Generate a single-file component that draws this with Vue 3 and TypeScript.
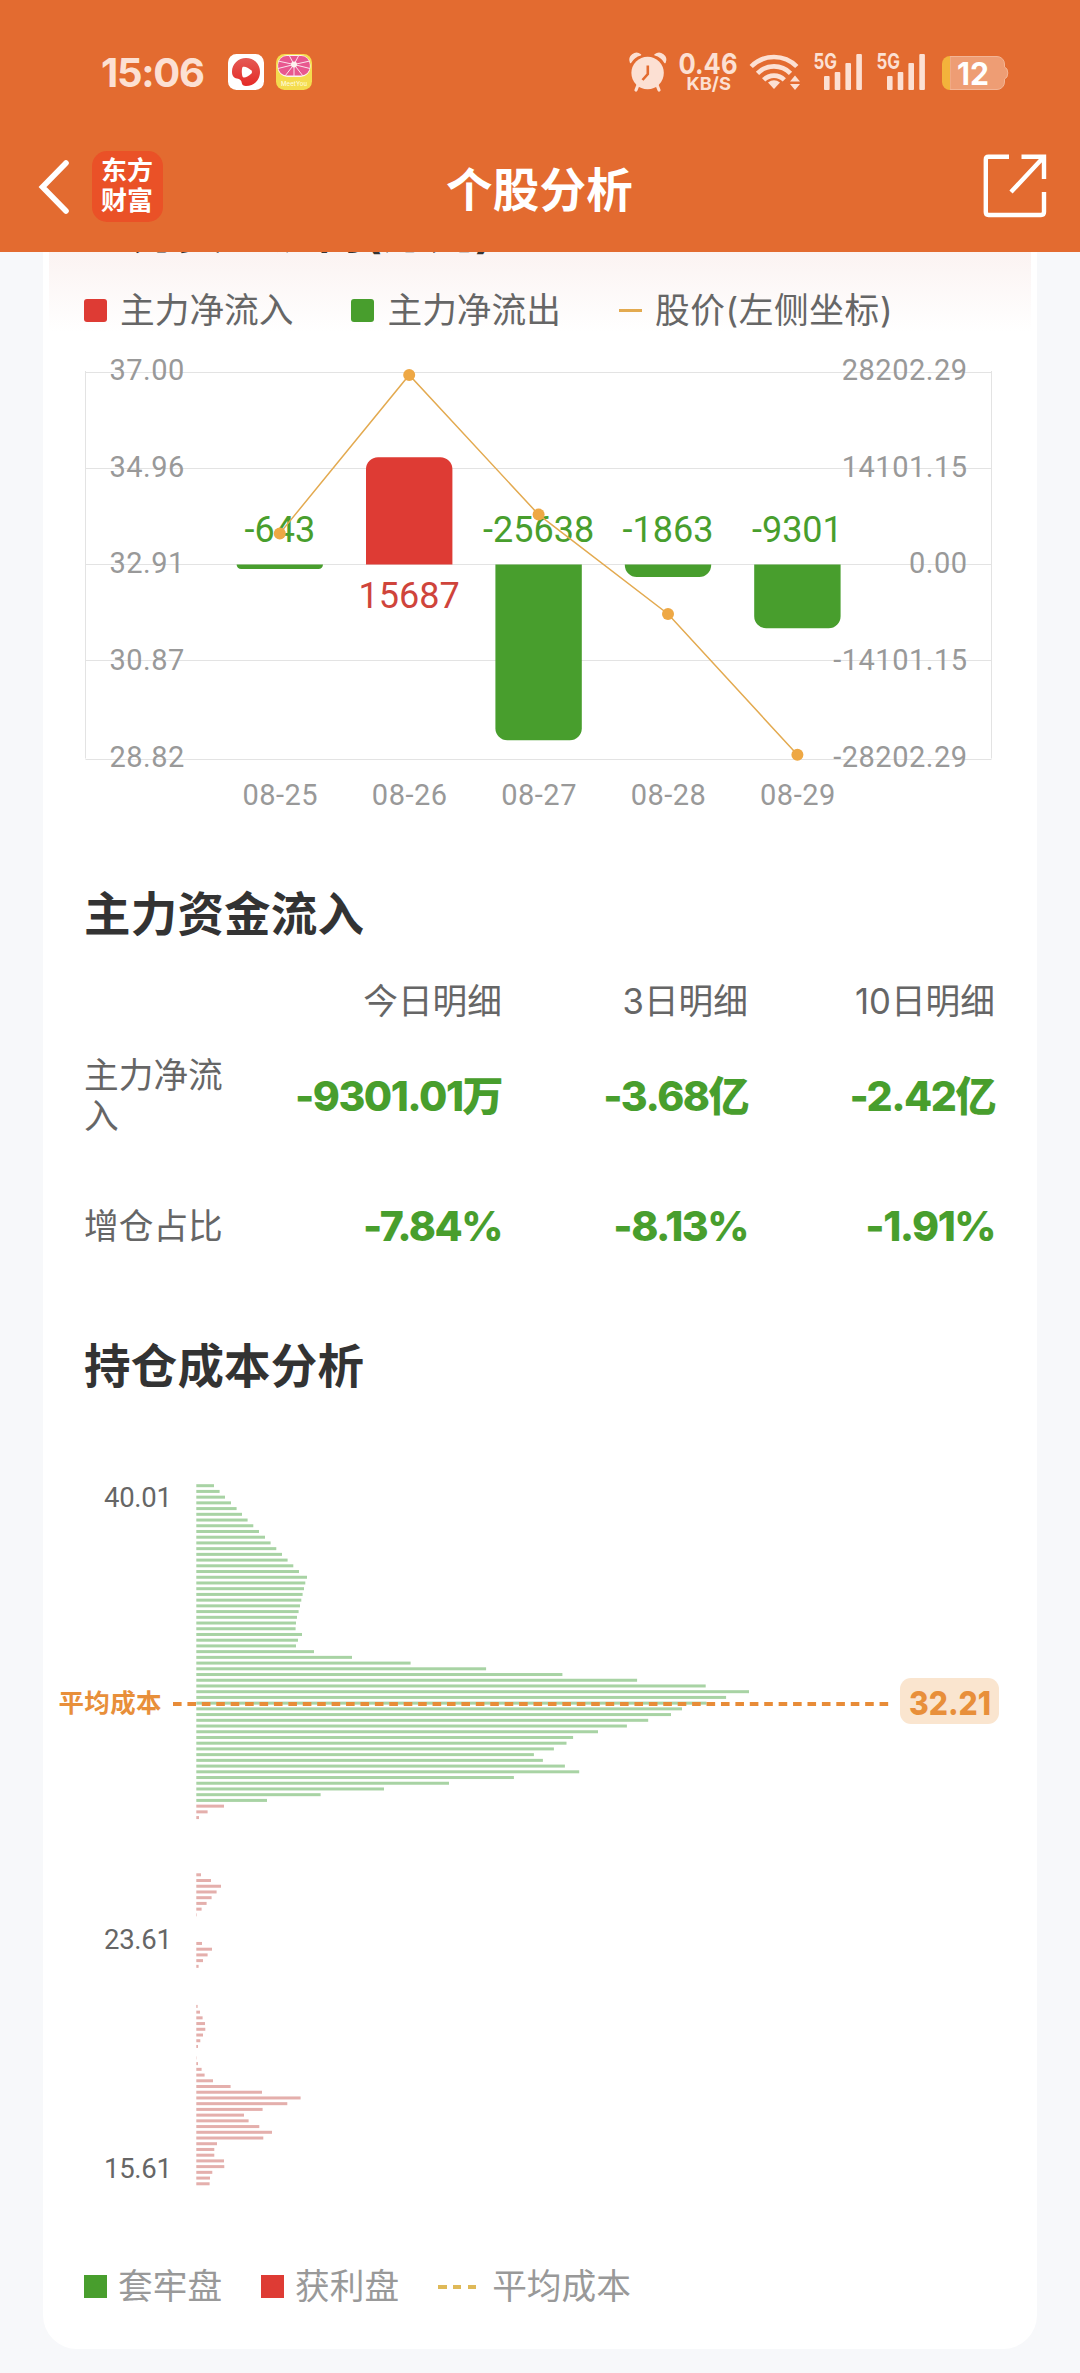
<script setup lang="ts">
interface FlowDay {
  date: string
  x: number
  value: number
  barEnd: number
  priceY: number
}

interface AxisRow {
  y: number
  label: number
  price: string
  flow: string
}

const ZERO_Y = 564.5
const BAR_HALF = 43.2

const days: FlowDay[] = [
  { date: '08-25', x: 279.8, value: -643, barEnd: 569, priceY: 533.4 },
  { date: '08-26', x: 409.2, value: 15687, barEnd: 457.3, priceY: 375 },
  { date: '08-27', x: 538.6, value: -25638, barEnd: 740.3, priceY: 514.6 },
  { date: '08-28', x: 668, value: -1863, barEnd: 577, priceY: 614 },
  { date: '08-29', x: 797.4, value: -9301, barEnd: 628.3, priceY: 754.8 },
]

const axis: AxisRow[] = [
  { y: 372.5, label: 379.7, price: '37.00', flow: '28202.29' },
  { y: 468.5, label: 476.7, price: '34.96', flow: '14101.15' },
  { y: 564.5, label: 572.7, price: '32.91', flow: '0.00' },
  { y: 660.5, label: 669.7, price: '30.87', flow: '-14101.15' },
  { y: 759.5, label: 766.7, price: '28.82', flow: '-28202.29' },
]

const pricePoints = days.map((d) => `${d.x},${d.priceY}`).join(' ')

// Bars are square on the zero line and rounded at the far end.
function barPath(d: FlowDay): string {
  const l = d.x - BAR_HALF
  const r = d.x + BAR_HALF
  const h = Math.abs(d.barEnd - ZERO_Y)
  const k = Math.min(12, h)
  const s = d.value > 0 ? -1 : 1
  const sweep = d.value > 0 ? 1 : 0
  return `M${l} ${ZERO_Y}V${d.barEnd - s * k}A${k} ${k} 0 0 ${sweep} ${l + k} ${d.barEnd}H${r - k}A${k} ${k} 0 0 ${sweep} ${r} ${d.barEnd - s * k}V${ZERO_Y}Z`
}

const table = {
  heads: ['今日明细', '3日明细', '10日明细'],
  rows: [
    { name: '主力净流入', cells: ['-9301.01万', '-3.68亿', '-2.42亿'] },
    { name: '增仓占比', cells: ['-7.84%', '-8.13%', '-1.91%'] },
  ],
}

const TRAPPED_COUNT = 56
const COST_TOP = 1485.7
const COST_STEP = 5.722

const costs: number[] = [
  17.7, 23.3, 28.7, 34.7, 40.3, 45.7, 51.3, 57, 62.7, 68.7, 74.3, 80, 85.7, 91.3, 97, 102.7,
  110.7, 109, 107.7, 106.3, 105, 103.7, 102.3, 100.7, 99.7, 99.3, 105.7, 101.7, 99.7, 117.7, 155.7, 214.3,
  289.8, 366.1, 440.8, 509.4, 552.7, 529.8, 510.2, 485.7, 474.7, 451.9, 430.6, 401.7, 376.8, 370.2,
  357.6, 337.6, 346.6, 368.6, 382.9, 317.6, 252.7, 187.7, 124.3, 70.7,
  27.7, 11.3, 2.7, 0, 0, 0, 0, 0, 0, 0, 0, 0,
  4.7, 14.7, 24.7, 20.3, 15.3, 10.3, 5.3, 0.5, 0, 0, 0, 0,
  5.7, 15.7, 11.3, 6.7, 2.3, 0, 0, 0, 0, 0, 0,
  1.3, 3.7, 6.3, 8.7, 9, 6.7, 4, 1.7, 0, 0.3,
  1.7, 5.3, 8.3, 16.7, 34.3, 65.7, 104.3, 91, 66.3, 47.7, 52.3, 63, 75.7, 67, 20.7, 18, 18, 27.7, 28, 16, 13.7, 13.3,
]

const costLabels = [
  { y: 1507, text: '40.01' },
  { y: 1949, text: '23.61' },
  { y: 2177.7, text: '15.61' },
]

const signals = [0, 63]
</script>

<template>
  <div class="page">
    <header class="header">
      <div class="status">
        <span class="clock">15:06</span>
        <svg class="app-icon" width="36" height="36" viewBox="0 0 36 36">
          <defs>
            <linearGradient id="play" x1="0" y1="0" x2="0" y2="1">
              <stop offset="0" stop-color="#e45a55" />
              <stop offset="1" stop-color="#e52a26" />
            </linearGradient>
          </defs>
          <rect width="36" height="36" rx="8.500" fill="#fff" />
          <path d="M18 4C10.300 4 4 10 4 17.500C4 21.500 5.500 24 9 24.500C12 25 13.500 26.500 13.800 29C14 31 15.500 32 18 32C26 32 32 26 32 18S26 4 18 4Z" fill="url(#play)" />
          <path d="M15 12.800Q18.500 12 23.500 16.500Q24.800 18 23.500 19.500Q18.500 24 15.500 23.500Q14 23 13.800 18Q13.800 13.300 15 12.800Z" fill="#fff" />
        </svg>
        <svg class="app-icon app-icon-2" width="36" height="36" viewBox="0 0 36 36">
          <rect width="36" height="36" rx="8.500" fill="#f4dc4e" />
          <rect x="1.500" y="1" width="33" height="22" rx="10" fill="#fdf3ee" />
          <rect x="2.200" y="2" width="31.600" height="19.500" rx="8.500" fill="#e8578f" />
          <path d="M18 10.500L13 1M18 10.500L23 1M18 10.500L2 7M18 10.500L34 7M18 10.500L2 14.500M18 10.500L34 14.500M18 10.500L9 22M18 10.500L18 23M18 10.500L27 22" stroke="#fbe3ec" stroke-width="1" />
          <circle cx="18" cy="10.500" r="3" fill="#fdf3ee" />
          <text x="18" y="31.500" text-anchor="middle" class="meet" textLength="26">MeetYou</text>
        </svg>
        <svg class="cluster" width="392" height="50" viewBox="622 46 392 50" fill="#fce0d3">
          <circle cx="647.600" cy="73" r="16.200" />
          <path d="M630.600 62.500A6.500 6.500 0 0 1 640.500 54.800Q634 56.500 630.600 62.500ZM665 62.500A6.500 6.500 0 0 0 655 54.800Q661.500 56.500 665 62.500Z" stroke="#fce0d3" stroke-width="1.500" stroke-linejoin="round" />
          <path d="M638 85L636 90M657 85L659 90" stroke="#fce0d3" stroke-width="3.200" stroke-linecap="round" />
          <path d="M647.800 65.500V74L642.500 80" fill="none" stroke="#e36b30" stroke-width="2.600" />
          <text x="678.500" y="74" class="speed" textLength="59" lengthAdjust="spacingAndGlyphs">0.46</text>
          <text x="686.500" y="89.800" class="unit" textLength="44.500" lengthAdjust="spacingAndGlyphs">KB/S</text>
          <g fill="none" stroke="#fce0d3" stroke-width="4.600">
            <path d="M751.200 66.500A32 32 0 0 1 796.800 66.500" />
            <path d="M757.500 73.300A23.200 23.200 0 0 1 790.500 73.300" />
            <path d="M763.700 79.900A14.600 14.600 0 0 1 784.300 79.900" />
          </g>
          <path d="M768 82.500Q774 78 780 82.500L774 89Z" />
          <path d="M790 81.500L795 75.500L800 81.500ZM790 84L795 90L800 84Z" />
          <g v-for="dx in signals" :key="dx" :transform="`translate(${dx} 0)`">
            <text x="813.500" y="68.800" class="net" textLength="23.500" lengthAdjust="spacingAndGlyphs">5G</text>
            <rect x="824" y="76" width="5.600" height="14" rx="1" />
            <rect x="834.700" y="72" width="5.600" height="18" rx="1" />
            <rect x="845.400" y="63" width="5.600" height="27" rx="1" />
            <rect x="856.300" y="54" width="5.600" height="36" rx="1" />
          </g>
          <path d="M950 56.500H997A7.500 7.500 0 0 1 1004.500 64V67Q1007.800 68 1007.800 73T1004.500 79V82A7.500 7.500 0 0 1 997 89.500H950Z" fill="#ee9d74" stroke="#f3b595" stroke-width="1" />
          <path d="M950 56V90A8 8 0 0 1 942 82V64A8 8 0 0 1 950 56Z" fill="#f3b33b" />
          <text x="957" y="84.700" class="battery" textLength="32" lengthAdjust="spacingAndGlyphs">12</text>
        </svg>
      </div>
      <div class="nav">
        <svg class="back" width="34" height="60" viewBox="0 0 34 60">
          <path d="M29 7L5.500 31L29 55" fill="none" stroke="#fff" stroke-width="5.600" stroke-linecap="round" />
        </svg>
        <div class="logo">东方财富</div>
        <h1 class="title">个股分析</h1>
        <svg class="share" width="64" height="64" viewBox="0 0 64 64" fill="none" stroke="#fff" stroke-width="4.400">
          <path d="M26 2.800H5.500Q2.800 2.800 2.800 5.500V58Q2.800 61 5.500 61H58Q61 61 61 58V38" />
          <path d="M38.500 2.800H61V25M61 2.800L28 38" />
        </svg>
      </div>
    </header>

    <main class="viewport">
      <section class="card">
        <div class="glow">
          <h2 class="heading passed">主力资金流向(万元)</h2>
          <ul class="legend">
            <li><i class="box red"></i>主力净流入</li>
            <li><i class="box green"></i>主力净流出</li>
            <li class="price-item"><i class="line"></i>股价(左侧坐标)</li>
          </ul>
        </div>

        <svg class="flow" width="994" height="475" viewBox="43 345 994 475">
          <g stroke="#e3e3e3" stroke-width="1">
            <line v-for="a in axis" :key="a.y" x1="85.500" x2="991.500" :y1="a.y" :y2="a.y" />
            <line x1="85.500" x2="85.500" y1="371" y2="758.500" />
            <line x1="991.500" x2="991.500" y1="371" y2="758.500" />
          </g>
          <path v-for="d in days" :key="d.date" :d="barPath(d)" :fill="d.value > 0 ? '#de3b34' : '#489e2d'" />
          <g class="axis">
            <template v-for="a in axis" :key="a.price">
              <text x="109.500" :y="a.label">{{ a.price }}</text>
              <text x="967.500" :y="a.label" text-anchor="end">{{ a.flow }}</text>
            </template>
            <text v-for="d in days" :key="d.date" :x="d.x + 0.5" y="805" text-anchor="middle">{{ d.date }}</text>
          </g>
          <g class="value">
            <text
              v-for="d in days"
              :key="d.date"
              :x="d.x"
              :y="d.value > 0 ? 607.7 : 541.7"
              :fill="d.value > 0 ? '#cf443b' : '#489e2d'"
              text-anchor="middle"
            >{{ d.value }}</text>
          </g>
          <polyline :points="pricePoints" fill="none" stroke="#e3aa50" stroke-width="1.500" />
          <circle v-for="d in days" :key="d.date" :cx="d.x" :cy="d.priceY" r="6" fill="#eea845" />
        </svg>

        <h2 class="heading inflow">主力资金流入</h2>
        <div class="table">
          <div class="row head">
            <span></span>
            <span v-for="h in table.heads" :key="h">{{ h }}</span>
          </div>
          <div v-for="r in table.rows" :key="r.name" class="row body">
            <span class="name">{{ r.name }}</span>
            <strong v-for="c in r.cells" :key="c">{{ c }}</strong>
          </div>
        </div>

        <h2 class="heading cost-title">持仓成本分析</h2>
        <svg class="cost" width="994" height="740" viewBox="43 1460 994 740">
          <rect
            v-for="(len, i) in costs"
            :key="i"
            x="196.300"
            :y="COST_TOP + i * COST_STEP - 1.5"
            :width="len"
            height="3"
            :fill="i < TRAPPED_COUNT ? '#a8d3a4' : '#e4afac'"
          />
          <text v-for="l in costLabels" :key="l.text" class="level" x="104" :y="l.y">{{ l.text }}</text>
          <line x1="173" x2="889" y1="1704" y2="1704" stroke="#e88c38" stroke-width="4" stroke-dasharray="8.600 5.820" />
          <text class="avg" x="58.500" y="1711.500" textLength="103">平均成本</text>
          <rect x="900" y="1678" width="99" height="46" rx="11" fill="#fae5cf" />
          <text class="avg-value" x="909" y="1714.500" textLength="82" lengthAdjust="spacingAndGlyphs">32.21</text>
        </svg>

        <ul class="legend cost-legend">
          <li><i class="box green"></i>套牢盘</li>
          <li><i class="box red"></i>获利盘</li>
          <li><i class="dashes"><b></b><b></b><b></b></i>平均成本</li>
        </ul>
      </section>
    </main>
  </div>
</template>

<style>
body {
  margin: 0;
  background: #f7f8fa;
}
</style>

<style scoped>
.page {
  width: 1080px;
  height: 2373px;
  overflow: hidden;
  background: #f7f8fa;
  font-family: Inter, 'Noto Sans CJK SC', sans-serif;
}
.page * {
  box-sizing: border-box;
}
.header {
  height: 252px;
  background: #e36b30;
  color: #fff;
}
.status {
  display: flex;
  align-items: center;
  height: 144px;
  padding: 0 66px 0 101px;
}
.clock {
  width: 127px;
  font-size: 40px;
  font-weight: 700;
  letter-spacing: -1.3px;
  color: #fce0d3;
}
.app-icon-2 {
  margin-left: 12px;
}
.cluster {
  margin-left: auto;
  margin-top: -2px;
}
.meet {
  font: 500 6px Inter, sans-serif;
  fill: #fffbd8;
}
.speed {
  font: 700 28px Inter, sans-serif;
}
.unit {
  font: 700 18px Inter, sans-serif;
}
.net {
  font: 700 21.500px Inter, sans-serif;
}
.battery {
  font: 700 31px Inter, sans-serif;
  fill: #fff;
}
.nav {
  display: flex;
  align-items: center;
  height: 84px;
  padding: 0 33px 0 37px;
}
.logo {
  width: 71px;
  height: 71px;
  margin-left: 21px;
  padding: 5px 9px;
  border-radius: 15px;
  background: #ea5127;
  font-size: 26px;
  font-weight: 700;
  line-height: 30px;
}
.title {
  flex: 1;
  margin: 0;
  padding-right: 67px;
  font-size: 46.500px;
  font-weight: 700;
  letter-spacing: 0.3px;
  text-align: center;
}
.viewport {
  height: 2121px;
  overflow: hidden;
}
.card {
  width: 994px;
  height: 2149px;
  margin: -52px auto 0 43px;
  border-radius: 34px;
  background: #fff;
}
.glow {
  height: 145px;
  margin: 0 6px;
  padding: 0 35px;
  background: linear-gradient(#fbf3f2 52px, #fff 132px);
}
.heading {
  margin: 0;
  padding-left: 41px;
  font-size: 46.500px;
  font-weight: 700;
  line-height: 60px;
  letter-spacing: 0.2px;
  color: #333;
}
.passed {
  height: 92px;
  padding-left: 0;
  line-height: 62px;
}
.legend {
  display: flex;
  align-items: center;
  height: 37px;
  margin: 0;
  padding: 0;
  list-style: none;
  font-size: 34.700px;
  line-height: 37px;
  color: #666;
}
.legend li {
  display: flex;
  align-items: center;
  white-space: nowrap;
}
.legend li:nth-child(2) {
  margin-left: 58px;
}
.legend li:nth-child(3) {
  margin-left: 58px;
}
.legend .price-item {
  letter-spacing: 0.6px;
}
.box {
  width: 23px;
  height: 23px;
  margin-right: 13px;
  border-radius: 3px;
}
.red {
  background: #de3b34;
}
.green {
  background: #489e2d;
}
.line {
  width: 23px;
  height: 3px;
  margin-right: 13px;
  background: #e3aa50;
}
.flow,
.cost {
  display: block;
}
.axis {
  font: 400 29px Roboto, sans-serif;
  letter-spacing: 0.5px;
  fill: #999;
}
.value {
  font: 400 36px Roboto, sans-serif;
}
.inflow {
  margin-top: 64px;
}
.row {
  display: grid;
  grid-template-columns: 140px 278px 246px 247px;
  align-items: center;
  padding-left: 41px;
  font-size: 34.700px;
  color: #666;
  text-align: right;
}
.head {
  height: 52px;
  margin: 31px 0 4px;
  line-height: 52px;
}
.body {
  height: 130px;
  line-height: 41px;
}
.name {
  text-align: left;
}
.row strong {
  font-size: 41px;
  font-weight: 800;
  letter-spacing: -1.5px;
  color: #489e2d;
}
.cost-title {
  margin-top: 45px;
}
.cost {
  margin-top: 64px;
}
.level {
  font: 400 27.500px Roboto, sans-serif;
  letter-spacing: -0.3px;
  fill: #666;
}
.avg {
  font: 700 25.500px 'Noto Sans CJK SC', sans-serif;
  fill: #e88f3a;
}
.avg-value {
  font: 800 33px Inter, sans-serif;
  fill: #e88f3a;
}
.cost-legend {
  margin-top: 68px;
  padding-left: 41px;
  color: #999;
}
.cost-legend .box {
  border-radius: 0;
  margin-right: 11px;
}
.cost-legend li:nth-child(2),
.cost-legend li:nth-child(3) {
  margin-left: 39px;
}
.dashes {
  display: flex;
  justify-content: space-between;
  width: 38px;
  margin-right: 16px;
}
.dashes b {
  width: 8.500px;
  height: 4px;
  background: #dfb958;
}
</style>
